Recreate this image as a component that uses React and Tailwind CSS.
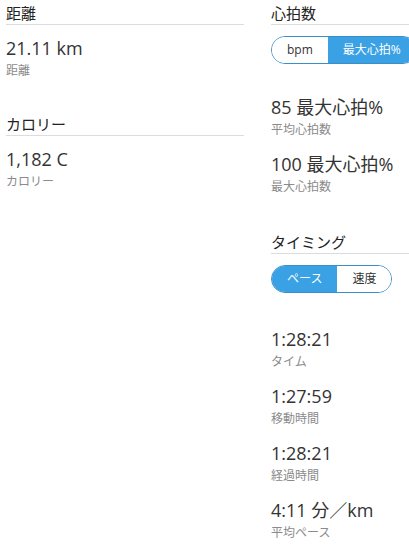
const FONT = { fontFamily: '"Open Sans", "Noto Sans CJK JP", sans-serif' };

const Heading = ({ children, className = "" }) => (
  <div
    className={`pt-[3px] pb-[1px] text-[15px] leading-[20px] text-[#222] border-b border-[#dcdcdc] ${className}`}
  >
    {children}
  </div>
);

const Stat = ({ value, label, className = "" }) => (
  <div className={className}>
    <div className="text-[18px] leading-[24px] text-[#333]">{value}</div>
    <div className="mt-[3px] text-[12px] leading-[16px] text-[#8a8a8a]">{label}</div>
  </div>
);

const Toggle = ({ options, active, className = "" }) => (
  <div
    className={`flex w-max h-[28px] rounded-full border border-[#3b8fc6] overflow-hidden ${className}`}
  >
    {options.map((opt, idx) => (
      <div
        key={opt}
        className={`flex items-center px-[15px] text-[12px] ${
          idx === active ? "bg-[#3aa1e4] text-white" : "bg-white text-[#333]"
        }`}
      >
        {opt}
      </div>
    ))}
  </div>
);

export default function App() {
  return (
    <div className="w-[409px] h-[544px] overflow-hidden bg-white" style={FONT}>
      <div className="flex gap-[27px] pl-[6px]">
        <div className="w-[238px] shrink-0">
          <Heading>距離</Heading>
          <Stat className="mt-[11px]" value="21.11 km" label="距離" />
          <Heading className="mt-[32px]">カロリー</Heading>
          <Stat className="mt-[11px]" value="1,182 C" label="カロリー" />
        </div>
        <div className="w-[238px] shrink-0">
          <Heading>心拍数</Heading>
          <Toggle className="mt-[11px]" options={["bpm", "最大心拍%"]} active={1} />
          <Stat className="mt-[31px]" value="85 最大心拍%" label="平均心拍数" />
          <Stat className="mt-[14px]" value="100 最大心拍%" label="最大心拍数" />
          <Heading className="mt-[34px]">タイミング</Heading>
          <Toggle className="mt-[11px]" options={["ペース", "速度"]} active={0} />
          <Stat className="mt-[34px]" value="1:28:21" label="タイム" />
          <Stat className="mt-[14px]" value="1:27:59" label="移動時間" />
          <Stat className="mt-[14px]" value="1:28:21" label="経過時間" />
          <Stat className="mt-[14px]" value="4:11 分／km" label="平均ペース" />
        </div>
      </div>
    </div>
  );
}
